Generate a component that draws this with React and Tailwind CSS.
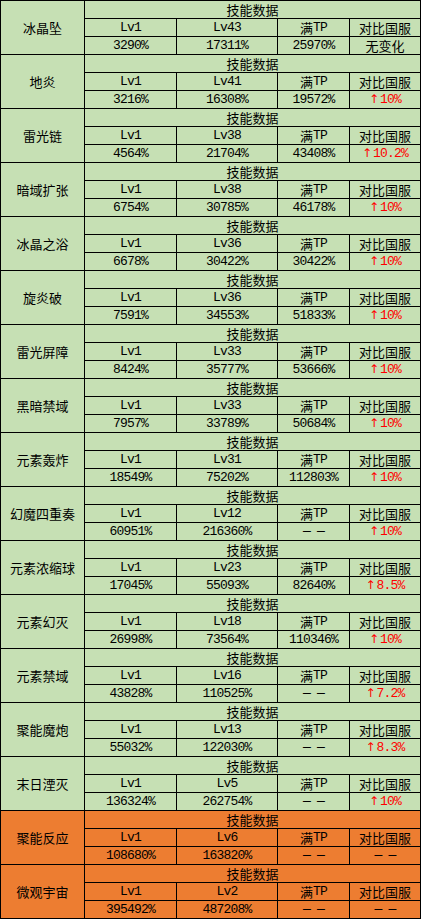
import React from "react";

const rows = [
  ["冰晶坠", "Lv43", "3290%", "17311%", "25970%", "无变化"],
  ["地炎", "Lv41", "3216%", "16308%", "19572%", "10%"],
  ["雷光链", "Lv38", "4564%", "21704%", "43408%", "10.2%"],
  ["暗域扩张", "Lv38", "6754%", "30785%", "46178%", "10%"],
  ["冰晶之浴", "Lv36", "6678%", "30422%", "30422%", "10%"],
  ["旋炎破", "Lv36", "7591%", "34553%", "51833%", "10%"],
  ["雷光屏障", "Lv33", "8424%", "35777%", "53666%", "10%"],
  ["黑暗禁域", "Lv33", "7957%", "33789%", "50684%", "10%"],
  ["元素轰炸", "Lv31", "18549%", "75202%", "112803%", "10%"],
  ["幻魔四重奏", "Lv12", "60951%", "216360%", "-", "10%"],
  ["元素浓缩球", "Lv23", "17045%", "55093%", "82640%", "8.5%"],
  ["元素幻灭", "Lv18", "26998%", "73564%", "110346%", "10%"],
  ["元素禁域", "Lv16", "43828%", "110525%", "-", "7.2%"],
  ["聚能魔炮", "Lv13", "55032%", "122030%", "-", "8.3%"],
  ["末日湮灭", "Lv5", "136324%", "262754%", "-", "10%"],
  ["聚能反应", "Lv6", "108680%", "163820%", "-", "-", true],
  ["微观宇宙", "Lv2", "395492%", "487208%", "-", "-", true],
];

const CJK = "font-['Noto_Sans_CJK_SC','Noto_Sans',sans-serif]";
const MONO = "font-['Liberation_Mono','Noto_Sans_CJK_SC',monospace] tracking-[-0.8px]";

function Mono({ children }) {
  return <span className={MONO}>{children}</span>;
}

function Han({ children }) {
  return <span className={CJK}>{children}</span>;
}

function Cell({ bg, children, className = "" }) {
  return (
    <div
      className={`${bg} flex items-center justify-center text-[13px] leading-[17px] text-black whitespace-nowrap ${className}`}
    >
      {children}
    </div>
  );
}

function Num({ v }) {
  return <Mono>{v === "-" ? "— —" : v}</Mono>;
}

export default function App() {
  return (
    <div className="w-[422px] bg-white">
      <div className="w-[421px] bg-black p-px">
        <div className="grid grid-cols-[83px_91px_100px_71px_70px] auto-rows-[17px] gap-px">
          {rows.map((r, i) => {
            const [name, lv, v1, v2, v3, cmp, orange] = r;
            const bg = orange ? "bg-[#ed7d31]" : "bg-[#c6e0b4]";
            return (
              <React.Fragment key={i}>
                <Cell bg={bg} className="row-span-3">
                  <Han>{name}</Han>
                </Cell>
                <Cell bg={bg} className="col-span-4">
                  <Han>技能数据</Han>
                </Cell>
                <Cell bg={bg}>
                  <Mono>Lv1</Mono>
                </Cell>
                <Cell bg={bg}>
                  <Mono>{lv}</Mono>
                </Cell>
                <Cell bg={bg}>
                  <Han>满</Han>
                  <Mono>TP</Mono>
                </Cell>
                <Cell bg={bg}>
                  <Han>对比国服</Han>
                </Cell>
                <Cell bg={bg}><Num v={v1} /></Cell>
                <Cell bg={bg}><Num v={v2} /></Cell>
                <Cell bg={bg}><Num v={v3} /></Cell>
                <Cell bg={bg}>
                  {cmp === "无变化" ? (
                    <Han>无变化</Han>
                  ) : cmp === "-" ? (
                    <Mono>— —</Mono>
                  ) : (
                    <span className="flex items-center text-[#ff0000]">
                      <span className="mr-px font-['DejaVu_Sans',sans-serif] text-[12px]">↑</span>
                      <Mono>{cmp}</Mono>
                    </span>
                  )}
                </Cell>
              </React.Fragment>
            );
          })}
        </div>
      </div>
    </div>
  );
}
